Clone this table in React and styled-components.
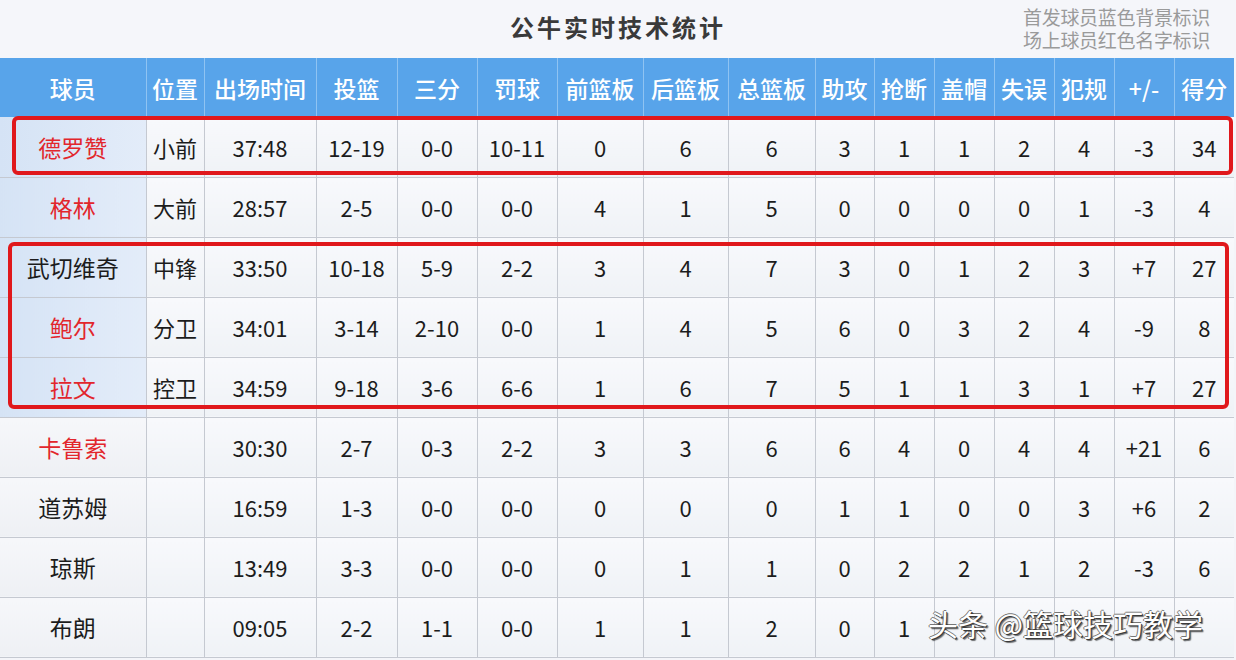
import React from "react";
import styled, { createGlobalStyle } from "styled-components";

const GlobalStyle = createGlobalStyle`
  html, body {
    margin: 0;
    padding: 0;
    background: #f4f5f9;
    font-family: "Noto Sans CJK SC", "Noto Sans", sans-serif;
  }
`;

const COLUMNS = [
  { label: "球员", width: 146 },
  { label: "位置", width: 58 },
  { label: "出场时间", width: 112 },
  { label: "投篮", width: 81 },
  { label: "三分", width: 80 },
  { label: "罚球", width: 80 },
  { label: "前篮板", width: 86 },
  { label: "后篮板", width: 85 },
  { label: "总篮板", width: 87 },
  { label: "助攻", width: 59 },
  { label: "抢断", width: 60 },
  { label: "盖帽", width: 60 },
  { label: "失误", width: 60 },
  { label: "犯规", width: 60 },
  { label: "+/-", width: 60 },
  { label: "得分", width: 60 },
];

// name, 红名(场上), 首发, 位置, 其余数据
const PLAYERS = [
  { name: "德罗赞", onCourt: true, starter: true, pos: "小前", stats: ["37:48", "12-19", "0-0", "10-11", 0, 6, 6, 3, 1, 1, 2, 4, "-3", 34] },
  { name: "格林", onCourt: true, starter: true, pos: "大前", stats: ["28:57", "2-5", "0-0", "0-0", 4, 1, 5, 0, 0, 0, 0, 1, "-3", 4] },
  { name: "武切维奇", onCourt: false, starter: true, pos: "中锋", stats: ["33:50", "10-18", "5-9", "2-2", 3, 4, 7, 3, 0, 1, 2, 3, "+7", 27] },
  { name: "鲍尔", onCourt: true, starter: true, pos: "分卫", stats: ["34:01", "3-14", "2-10", "0-0", 1, 4, 5, 6, 0, 3, 2, 4, "-9", 8] },
  { name: "拉文", onCourt: true, starter: true, pos: "控卫", stats: ["34:59", "9-18", "3-6", "6-6", 1, 6, 7, 5, 1, 1, 3, 1, "+7", 27] },
  { name: "卡鲁索", onCourt: true, starter: false, pos: "", stats: ["30:30", "2-7", "0-3", "2-2", 3, 3, 6, 6, 4, 0, 4, 4, "+21", 6] },
  { name: "道苏姆", onCourt: false, starter: false, pos: "", stats: ["16:59", "1-3", "0-0", "0-0", 0, 0, 0, 1, 1, 0, 0, 3, "+6", 2] },
  { name: "琼斯", onCourt: false, starter: false, pos: "", stats: ["13:49", "3-3", "0-0", "0-0", 0, 1, 1, 0, 2, 2, 1, 2, "-3", 6] },
  { name: "布朗", onCourt: false, starter: false, pos: "", stats: ["09:05", "2-2", "1-1", "0-0", 1, 1, 2, 0, 1, "", "", "", "", ""] },
];

const App = () => {
  return (
    <Page>
      <GlobalStyle />
      <TopBar>
        <span />
        <Title>公牛实时技术统计</Title>
        <Note>
          <NoteLine>首发球员蓝色背景标识</NoteLine>
          <NoteLine>场上球员红色名字标识</NoteLine>
        </Note>
      </TopBar>

      <TableWrap>
        <StatsTable>
          <colgroup>
            {COLUMNS.map((c) => (
              <col key={c.label} style={{ width: c.width }} />
            ))}
          </colgroup>
          <thead>
            <HeadRow>
              {COLUMNS.map((c) => (
                <HeadCell key={c.label}>{c.label}</HeadCell>
              ))}
            </HeadRow>
          </thead>
          <tbody>
            {PLAYERS.map((p) => (
              <BodyRow key={p.name}>
                <NameCell $starter={p.starter} $red={p.onCourt}>
                  {p.name}
                </NameCell>
                <Cell>{p.pos}</Cell>
                {p.stats.map((v, i) => (
                  <Cell key={i}>{v}</Cell>
                ))}
              </BodyRow>
            ))}
          </tbody>
        </StatsTable>

        {/* 红框标注 */}
        <Highlight $left={12} $top={58} $width={1221} $height={59} />
        <Highlight $left={8} $top={184} $width={1221} $height={167} />

        <Watermark>头条 @篮球技巧教学</Watermark>
      </TableWrap>
    </Page>
  );
};

export default App;

const Page = styled.div`
  width: 1236px;
  height: 660px;
  overflow: hidden;
  background: #f4f5f9;
`;

const TopBar = styled.div`
  height: 58px;
  display: grid;
  grid-template-columns: 1fr auto 1fr;
  align-items: start;
  background: #f5f6fa;
`;

const Title = styled.h1`
  margin: 0;
  padding-top: 9px;
  font-size: 24px;
  line-height: 36px;
  font-weight: 700;
  letter-spacing: 3px;
  color: #3a3a3a;
`;

const Note = styled.div`
  justify-self: end;
  padding: 5px 26px 0 0;
  color: #9a9a9a;
`;

const NoteLine = styled.div`
  font-size: 19px;
  line-height: 23px;
  letter-spacing: -0.3px;
`;

const TableWrap = styled.div`
  position: relative;
  width: 1234px;
`;

const StatsTable = styled.table`
  width: 1234px;
  table-layout: fixed;
  border-collapse: collapse;
`;

const HeadRow = styled.tr`
  height: 59px;
  background: #58a4ea;
`;

const HeadCell = styled.th`
  padding: 0;
  font-size: 23px;
  font-weight: 500;
  color: #ffffff;
  text-align: center;
  white-space: nowrap;
  border-left: 1px solid #8fc3f2;
  &:first-child {
    border-left: none;
  }
`;

const BodyRow = styled.tr`
  height: 60px;
  border-bottom: 1px solid #c5c9d1;
`;

const Cell = styled.td`
  padding: 0;
  font-size: 22px;
  color: #1c1c1c;
  text-align: center;
  white-space: nowrap;
  background: linear-gradient(180deg, #f8f9fc 0%, #eff2f6 100%);
  border-left: 1px solid #c5c9d1;
`;

const NameCell = styled(Cell)`
  border-left: none;
  font-size: 23px;
  color: ${(p) => (p.$red ? "#e2262c" : "#1c1c1c")};
  background: ${(p) =>
    p.$starter
      ? "linear-gradient(90deg, #d5e3f5 0%, #e3ecf9 100%)"
      : "linear-gradient(180deg, #f6f7fa 0%, #eef0f4 100%)"};
`;

const Highlight = styled.div`
  position: absolute;
  left: ${(p) => p.$left}px;
  top: ${(p) => p.$top}px;
  width: ${(p) => p.$width}px;
  height: ${(p) => p.$height}px;
  box-sizing: border-box;
  border: 4px solid #e0181c;
  border-radius: 6px;
  pointer-events: none;
`;

const Watermark = styled.div`
  position: absolute;
  left: 928px;
  top: 545px;
  font-size: 30px;
  line-height: 40px;
  color: #ffffff;
  white-space: nowrap;
  text-shadow: 1px 1px 0 #3a3a3a, 2px 2px 1px rgba(0, 0, 0, 0.55),
    -1px 0 0 #777, 0 -1px 0 #777;
`;
